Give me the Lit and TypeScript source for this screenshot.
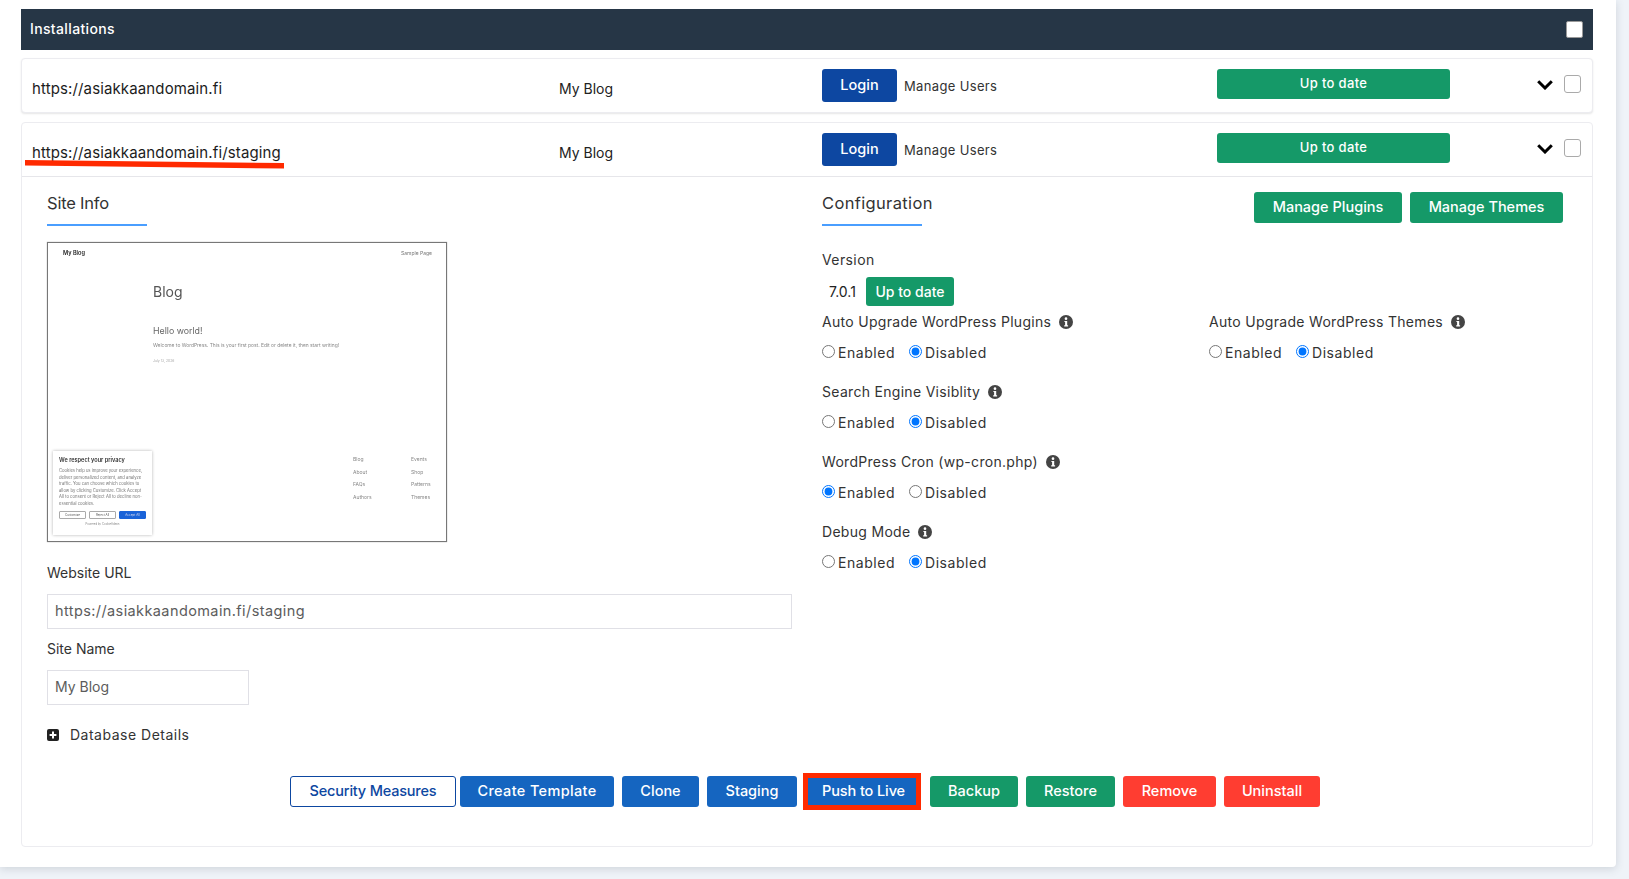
import { LitElement, html, css } from "lit";
import { customElement } from "lit/decorators.js";

const info = html`<svg class="info" viewBox="0 0 14 14" aria-hidden="true"><circle cx="7" cy="7" r="7" fill="#444"/><circle cx="7" cy="3.7" r="1.35" fill="#fff"/><path d="M5.4 5.9h2.8v4.3h.9v1.2H5.2v-1.2h.9V7.1h-.7z" fill="#fff"/></svg>`;
const chevron = html`<svg class="chev" viewBox="0 0 16 10" aria-hidden="true"><path d="M1.2 1.3 8 8 14.8 1.3" fill="none" stroke="#000" stroke-width="3"/></svg>`;

const radio = (name: string, on: boolean) => html`<div class="radios">
  <label><input type="radio" name=${name} ?checked=${on} />Enabled</label>
  <label class="second"><input type="radio" name=${name} ?checked=${!on} />Disabled</label>
</div>`;

const setting = (label: string, name: string, on: boolean) => html`<div class="setting">
  <div class="lbl">${label}${info}</div>
  ${radio(name, on)}
</div>`;

@customElement("app-root")
export class AppRoot extends LitElement {
  static styles = css`
    :host { display: block; height: 879px; background: #eff3f8; font-family: Inter, "Noto Sans", sans-serif; color: #333; overflow: hidden; }
    * { box-sizing: border-box; }
    .panel { width: 1616px; height: 867px; background: #fff; padding: 9px 23px 0 21px; border-bottom-right-radius: 4px; box-shadow: 0 2px 8px rgba(60, 70, 90, .18); }
    .bar { height: 41px; background: #263646; color: #fff; display: flex; align-items: center; justify-content: space-between; padding: 0 10px 2px 9px; font-size: 14px; font-weight: 500; letter-spacing: .36px; }
    .bar input { appearance: none; margin: 2px 0 0 0; width: 17px; height: 17px; background: #fff; border: 1px solid #999; border-radius: 2px; }
    .card { border: 1px solid #ececf0; border-radius: 4px; margin-top: 8px; background: #fff; }
    .card.short { box-shadow: 0 1px 2px rgba(0,0,0,.1); }
    .card + .card { margin-top: 9px; position: relative; }
    .head { height: 53px; display: grid; grid-template-columns: 527px 263px 395px 233px 103px 28px; padding-left: 10px; padding-top: 10px; }
    .open .head { height: 54px; border-bottom: 1px solid #e6e6ea; }
    .url { font-size: 15px; letter-spacing: .13px; color: #1c1c1c; line-height: 20px; padding-top: 10px; }
    .name { font-size: 14px; color: #222; line-height: 20px; padding-top: 10px; }
    .logincell { display: flex; align-items: flex-start; gap: 7px; }
    .btn { border: 0; border-radius: 3px; color: #fff; font: 500 14.5px/1 Inter, "Noto Sans", sans-serif; padding: 0; display: flex; align-items: center; justify-content: center; }
    .login { width: 75px; height: 33px; background: #0d47a1; }
    .mu { font-size: 13px; color: #333; line-height: 20px; padding-top: 7px; letter-spacing: .35px; }
    .status { height: 30px; background: #159968; font-size: 13px; padding-bottom: 1px; letter-spacing: .35px; }
    .chev { width: 16px; height: 10px; margin: 11px 0 0 0; display: block; justify-self: end; }
    .head > input { appearance: none; margin: 6px 0 0 0; width: 17px; height: 18px; background: #fff; border: 1.5px solid #aaa; border-radius: 3px; justify-self: end; }
    .scribble { position: absolute; left: 3px; top: 36px; width: 260px; height: 10px; pointer-events: none; }
    .body { padding: 0 29px 39px 25px; }
    .cols { display: grid; grid-template-columns: 775px 1fr; }
    .title { width: 100px; font-size: 16.5px; line-height: 24px; color: #333; padding: 14px 0 9px; border-bottom: 2px solid #4a9eff; box-sizing: content-box; white-space: nowrap; }
    .site { letter-spacing: -.2px; }
    .conf { letter-spacing: .35px; }
    .left { display: flex; flex-direction: column; align-items: flex-start; }
    .thumb { position: relative; width: 400px; height: 300px; margin-top: 16px; border: 1px solid #777; box-shadow: 0 0 1px #999; background: #fff; overflow: hidden; font-family: Inter, sans-serif; color: #555; }
    .thumb-in { filter: blur(.25px); height: 100%; }
    .th-top { display: flex; justify-content: space-between; padding: 7px 14px 0 15px; line-height: 7px; }
    .th-brand { font-size: 5.6px; font-weight: 600; color: #222; }
    .th-sample { font-size: 5px; color: #777; }
    .th-main { padding: 25px 0 0 105px; }
    .th-blog { font-size: 14px; line-height: 20px; color: #555; }
    .th-hello { font-size: 8.8px; line-height: 12px; margin-top: 23px; color: #666; }
    .th-wel { font-size: 4.9px; line-height: 7px; margin-top: 5px; color: #888; white-space: nowrap; }
    .th-date { font-size: 3.4px; line-height: 5px; margin-top: 10px; color: #aaa; }
    .th-links { position: absolute; left: 305px; top: 210px; display: grid; grid-template-columns: 58px 30px; grid-auto-rows: 12.7px; font-size: 5px; line-height: 12.7px; color: #888; }
    .cookie { position: absolute; left: 5px; top: 208px; width: 99px; height: 84px; background: #fff; box-shadow: 0 0 3px rgba(0,0,0,.3); padding: 5px 6px; }
    .ck-t { font-size: 5.6px; font-weight: 600; line-height: 8px; color: #333; }
    .ck-p { font-size: 4.2px; line-height: 6.5px; margin-top: 4px; color: #777; white-space: nowrap; }
    .ck-bs { display: flex; gap: 3px; margin-top: 4px; }
    .ck-bs span { flex: 1; height: 8px; border: .5px solid #aaa; border-radius: 1px; font-size: 3px; line-height: 7px; text-align: center; color: #555; }
    .ck-bs span.pri { background: #1a63d8; border-color: #1a63d8; color: #dde; }
    .ck-pow { font-size: 2.8px; text-align: center; margin-top: 3px; color: #888; }
    label, .flabel { font-size: 14px; }
    .flabel { line-height: 20px; color: #333; }
    .left .flabel { margin-top: 10px; }
    .left .flabel.first { margin-top: 21px; }
    .text { height: 35px; margin-top: 11px; border: 1px solid #e0e0e6; padding: 0 7px 2px; font: 14.5px Inter, sans-serif; color: #5c5c5c; outline: none; }
    .wide { width: 745px; letter-spacing: .4px; }
    .small { width: 202px; font-size: 14px; }
    .db { display: flex; align-items: center; gap: 11px; margin-top: 20px; line-height: 20px; font-size: 14px; color: #333; letter-spacing: .5px; }
    .db svg { width: 12px; height: 12px; }
    .cfg-top { display: flex; justify-content: space-between; align-items: flex-start; }
    .mgr { display: flex; gap: 8px; padding-top: 15px; }
    .mgr .btn { height: 31px; background: #159968; }
    .mp { width: 148px; }
    .mt { width: 153px; }
    .ver { display: flex; align-items: center; margin-top: 7px; padding-left: 7px; height: 29px; }
    .ver b { font-weight: 400; font-size: 14px; width: 37px; color: #222; }
    .vbtn { width: 88px; height: 29px; background: #159968; font-size: 14px; }
    .cfg > .flabel { margin-top: 24px; letter-spacing: .4px; }
    .settings { display: grid; grid-template-columns: 387px 1fr; margin-top: 6px; row-gap: 19px; }
    .setting .lbl { display: flex; align-items: center; gap: 8px; font-size: 14px; line-height: 20px; color: #333; white-space: nowrap; letter-spacing: .3px; }
    .info { width: 14px; height: 14px; flex: none; }
    .radios { display: flex; margin-top: 11px; height: 20px; }
    .radios label { display: flex; align-items: center; gap: 3px; line-height: 20px; color: #333; width: 87px; letter-spacing: .55px; }
    .radios input { margin: 0 0 4px 0; width: 13px; height: 13px; }
    .actions { display: flex; height: 31px; margin: 31px 0 0 243px; width: max-content; }
    .actions .btn { background: #1565c0; margin-right: 8px; }
    .actions .sec { background: #fff; color: #0d47a1; border: 1px solid #0d47a1; margin-right: 4px; width: 166px; letter-spacing: -.2px; }
    .actions .tmpl { width: 154px; letter-spacing: .35px; }
    .actions .clone { width: 77px; }
    .actions .stag { width: 90px; margin-right: 9px; }
    .actions .push { position: relative; width: 112px; margin-right: 12px; padding-left: 3px; letter-spacing: -.1px; }
    .actions .push::after { content: ""; position: absolute; inset: -3px; border: 5px solid #ff2a00; }
    .actions .bk { width: 88px; background: #159968; }
    .actions .rs { width: 89px; background: #159968; }
    .actions .rm { width: 93px; background: #ff3d31; }
    .actions .un { width: 96px; background: #ff3d31; margin-right: 0; }
  `;

  private head(url: string) {
    return html`<div class="head">
      <div class="url">${url}</div>
      <div class="name">My Blog</div>
      <div class="logincell"><button class="btn login">Login</button><span class="mu">Manage Users</span></div>
      <button class="btn status">Up to date</button>
      ${chevron}
      <input type="checkbox" />
    </div>`;
  }

  private thumb() {
    return html`<div class="thumb"><div class="thumb-in">
      <div class="th-top"><span class="th-brand">My Blog</span><span class="th-sample">Sample Page</span></div>
      <div class="th-main">
        <div class="th-blog">Blog</div>
        <div class="th-hello">Hello world!</div>
        <div class="th-wel">Welcome to WordPress. This is your first post. Edit or delete it, then start writing!</div>
        <div class="th-date">July 13, 2026</div>
      </div>
      <div class="th-links"><span>Blog</span><span>Events</span><span>About</span><span>Shop</span><span>FAQs</span><span>Patterns</span><span>Authors</span><span>Themes</span></div>
      <div class="cookie">
        <div class="ck-t">We respect your privacy</div>
        <div class="ck-p">Cookies help us improve your experience,<br />deliver personalized content, and analyze<br />traffic. You can choose which cookies to<br />allow by clicking Customize. Click Accept<br />All to consent or Reject All to decline non-<br />essential cookies.</div>
        <div class="ck-bs"><span>Customize</span><span>Reject All</span><span class="pri">Accept All</span></div>
        <div class="ck-pow">Powered by CookieAdmin</div>
      </div>
    </div></div>`;
  }

  render() {
    return html`<div class="panel">
      <div class="bar"><span>Installations</span><input type="checkbox" /></div>
      <div class="card short">${this.head("https://asiakkaandomain.fi")}</div>
      <div class="card open">
        ${this.head("https://asiakkaandomain.fi/staging")}
        <svg class="scribble" viewBox="0 0 260 10" aria-hidden="true"><path d="M0 1 L259 4 L259 9.5 L0 6.5 Z" fill="#ff2a00"/></svg>
        <div class="body">
          <div class="cols">
            <div class="left">
              <div class="title site">Site Info</div>
              ${this.thumb()}
              <div class="flabel first">Website URL</div>
              <input class="text wide" .value=${"https://asiakkaandomain.fi/staging"} />
              <div class="flabel">Site Name</div>
              <input class="text small" .value=${"My Blog"} />
              <div class="db"><svg viewBox="0 0 12 12" aria-hidden="true"><rect width="12" height="12" rx="2" fill="#222"/><path d="M6 2.6v6.8M2.6 6h6.8" stroke="#fff" stroke-width="2"/></svg>Database Details</div>
            </div>
            <div class="cfg">
              <div class="cfg-top">
                <div class="title conf">Configuration</div>
                <div class="mgr"><button class="btn mp">Manage Plugins</button><button class="btn mt">Manage Themes</button></div>
              </div>
              <div class="flabel">Version</div>
              <div class="ver"><b>7.0.1</b><button class="btn vbtn">Up to date</button></div>
              <div class="settings">
                ${setting("Auto Upgrade WordPress Plugins", "a", false)}
                ${setting("Auto Upgrade WordPress Themes", "b", false)}
                ${setting("Search Engine Visiblity", "c", false)}
                <div></div>
                ${setting("WordPress Cron (wp-cron.php)", "d", true)}
                <div></div>
                ${setting("Debug Mode", "e", false)}
              </div>
            </div>
          </div>
          <div class="actions">
            <button class="btn sec">Security Measures</button>
            <button class="btn tmpl">Create Template</button>
            <button class="btn clone">Clone</button>
            <button class="btn stag">Staging</button>
            <button class="btn push">Push to Live</button>
            <button class="btn bk">Backup</button>
            <button class="btn rs">Restore</button>
            <button class="btn rm">Remove</button>
            <button class="btn un">Uninstall</button>
          </div>
        </div>
      </div>
    </div>`;
  }
}
